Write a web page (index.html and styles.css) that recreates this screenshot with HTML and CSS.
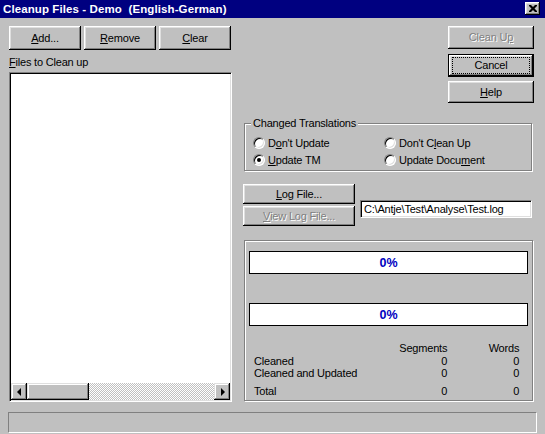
FILE: index.html
```html
<!DOCTYPE html>
<html>
<head>
<meta charset="utf-8">
<title>Cleanup Files</title>
<link rel="stylesheet" href="styles.css">
</head>
<body>
<div class="window">
  <div class="titlebar">
    <span class="title">Cleanup Files - Demo&nbsp; (English-German)</span>
    <span class="close"><svg width="8" height="7" viewBox="0 0 8 7"><path d="M0 0h2l2 2 2-2h2v1l-2.5 2.5 2.5 2.5v1h-2l-2-2-2 2h-2v-1l2.5-2.5-2.5-2.5z" fill="#000"/></svg></span>
  </div>
  <div class="client">
    <div class="cols">
      <div class="left">
        <div class="btnrow">
          <div class="btn w72"><u>A</u>dd...</div>
          <div class="btn w72"><u>R</u>emove</div>
          <div class="btn w72"><u>C</u>lear</div>
        </div>
        <div class="label"><u>F</u>iles to Clean up</div>
        <div class="listbox">
          <div class="listcontent"></div>
          <div class="hscroll">
            <div class="sbtn"><span class="tri-left"></span></div>
            <div class="thumb"></div>
            <div class="track"></div>
            <div class="sbtn"><span class="tri-right"></span></div>
          </div>
        </div>
      </div>
      <div class="right">
        <div class="topbtns">
          <div class="btn w86 disabled">Clean U<u>p</u></div>
          <div class="btn w86 default"><span class="focus">Cancel</span></div>
          <div class="btn w86 help"><u>H</u>elp</div>
        </div>
        <div class="group trans">
          <span class="legend">Changed Translations</span>
          <div class="radios">
            <div class="radio"><span class="rb"></span>D<u>o</u>n't Update</div>
            <div class="radio"><span class="rb"></span>Don't C<u>l</u>ean Up</div>
            <div class="radio"><span class="rb on"></span><u>U</u>pdate TM</div>
            <div class="radio"><span class="rb"></span>Update Docu<u>m</u>ent</div>
          </div>
        </div>
        <div class="logrow">
          <div class="logbtns">
            <div class="btn w112 h20"><u>L</u>og File...</div>
            <div class="btn w112 h20 disabled"><u>V</u>iew Log File...</div>
          </div>
          <div class="field">C:\Antje\Test\Analyse\Test.log</div>
        </div>
        <div class="group prog">
          <div class="pbar">0%</div>
          <div class="pbar second">0%</div>
          <div class="stats">
            <div></div><div class="num">Segments</div><div class="num">Words</div>
            <div>Cleaned</div><div class="num">0</div><div class="num">0</div>
            <div>Cleaned and Updated</div><div class="num">0</div><div class="num">0</div>
            <div class="total">Total</div><div class="num total">0</div><div class="num total">0</div>
          </div>
        </div>
      </div>
    </div>
    <div class="status"></div>
  </div>
</div>
</body>
</html>
```
FILE: styles.css
```css
html, body {
  margin: 0;
  padding: 0;
  background: #c0c0c0;
}
body {
  font-family: "Liberation Sans", Arial, sans-serif;
  font-size: 11px;
  letter-spacing: -0.2px;
  color: #000;
}
.window {
  width: 545px;
  height: 434px;
  background: #c0c0c0;
  overflow: hidden;
}
.titlebar {
  height: 18px;
  background: #000080;
  display: flex;
  align-items: center;
  justify-content: space-between;
  padding: 0 5px 0 3px;
}
.title {
  color: #fff;
  font-weight: bold;
  font-size: 11.5px;
  letter-spacing: 0.1px;
}
.close {
  width: 15px;
  height: 13px;
  background: #c0c0c0;
  box-shadow: inset -1px -1px #000, inset 1px 1px #fff, inset -2px -2px #808080, inset 2px 2px #dfdfdf;
  display: flex;
  align-items: center;
  justify-content: center;
  margin-top: -1px;
}
.client {
  padding: 8px 0 0 9px;
}
.cols {
  display: flex;
}
.left {
  width: 223px;
}
.btn {
  height: 23px;
  box-sizing: border-box;
  background: #c0c0c0;
  box-shadow: inset -1px -1px #000, inset 1px 1px #fff, inset -2px -2px #808080, inset 2px 2px #dfdfdf;
  display: flex;
  align-items: center;
  justify-content: center;
  padding-bottom: 1px;
  white-space: nowrap;
}
.w72 { width: 72px; height: 24px; }
.w86 { width: 86px; }
.w112 { width: 112px; }
.h20 { height: 20px; }
.disabled {
  color: #808080;
  text-shadow: 1px 1px 0 #fff;
}
.btnrow {
  display: flex;
  gap: 3px;
}
.label {
  margin-top: 6px;
  line-height: 13px;
}
.listbox {
  margin-top: 3px;
  height: 330px;
  box-sizing: border-box;
  border: 1px solid;
  border-color: #808080 #fff #fff #808080;
  box-shadow: inset 1px 1px #000, inset -1px -1px #dfdfdf;
  padding: 1px;
  display: flex;
  flex-direction: column;
  background: #fff;
}
.listcontent {
  flex: 1;
  background: #fff;
}
.hscroll {
  height: 17px;
  display: flex;
}
.sbtn {
  width: 16px;
  height: 17px;
  background: #c0c0c0;
  box-shadow: inset -1px -1px #000, inset 1px 1px #dfdfdf, inset -2px -2px #808080, inset 2px 2px #fff;
  display: flex;
  align-items: center;
  justify-content: center;
}
.tri-left {
  width: 0;
  height: 0;
  border-top: 4px solid transparent;
  border-bottom: 4px solid transparent;
  border-right: 4px solid #000;
  margin-left: -1px;
}
.tri-right {
  width: 0;
  height: 0;
  border-top: 4px solid transparent;
  border-bottom: 4px solid transparent;
  border-left: 4px solid #000;
  margin-left: 1px;
}
.thumb {
  width: 62px;
  background: #c0c0c0;
  box-shadow: inset -1px -1px #000, inset 1px 1px #dfdfdf, inset -2px -2px #808080, inset 2px 2px #fff;
}
.track {
  flex: 1;
  background: repeating-conic-gradient(#c0c0c0 0 25%, #fff 0 50%) 0 0 / 2px 2px;
}
.right {
  margin-left: 11px;
  width: 291px;
}
.topbtns {
  display: flex;
  flex-direction: column;
  align-items: flex-end;
}
.default {
  margin-top: 5px;
  box-shadow: inset 0 0 0 1px #000, inset -2px -2px #000, inset 2px 2px #fff, inset -3px -3px #808080, inset 3px 3px #dfdfdf;
}
.focus {
  display: flex;
  align-items: center;
  justify-content: center;
  width: 76px;
  height: 15px;
  outline: 1px dotted #000;
}
.help {
  margin-top: 4px;
  height: 22px;
}
.group {
  position: relative;
  border: 1px solid #808080;
  box-shadow: 1px 1px 0 #fff, inset 1px 1px 0 #fff;
  margin-left: 1px;
}
.legend {
  position: absolute;
  top: -8px;
  left: 6px;
  padding: 0 2px;
  background: #c0c0c0;
  line-height: 14px;
}
.trans {
  margin-top: 20px;
  width: 288px;
  height: 48px;
  box-sizing: border-box;
  padding: 12px 0 0 8px;
}
.radios {
  display: grid;
  grid-template-columns: 131px 1fr;
  row-gap: 4px;
}
.radio {
  display: flex;
  align-items: center;
  height: 13px;
  white-space: nowrap;
}
.rb {
  width: 12px;
  height: 12px;
  box-sizing: border-box;
  border-radius: 50%;
  background: #fff;
  border: 1px solid;
  border-color: #808080 #fff #fff #808080;
  box-shadow: inset 1px 1px 0 #000, inset -1px -1px 0 #dfdfdf;
  margin-right: 3px;
  display: flex;
  align-items: center;
  justify-content: center;
}
.rb.on::after {
  content: "";
  width: 4px;
  height: 4px;
  border-radius: 50%;
  background: #000;
}
.logrow {
  display: flex;
  margin-top: 13px;
}
.logbtns {
  display: flex;
  flex-direction: column;
  gap: 2px;
}
.field {
  margin-left: 5px;
  margin-top: 16px;
  width: 172px;
  height: 18px;
  box-sizing: border-box;
  background: #fff;
  border: 1px solid;
  border-color: #808080 #fff #fff #808080;
  box-shadow: inset 1px 1px 0 #000, inset -1px -1px 0 #dfdfdf;
  padding: 2px 0 0 3px;
  line-height: 13px;
  white-space: nowrap;
}
.prog {
  margin-top: 14px;
  width: 289px;
  height: 161px;
  box-sizing: border-box;
  padding: 10px 0 0 4px;
}
.pbar {
  width: 279px;
  height: 23px;
  box-sizing: border-box;
  background: #fff;
  border: 1px solid #000;
  display: flex;
  align-items: center;
  justify-content: center;
  color: #0000c0;
  font-weight: bold;
  font-size: 12.5px;
  letter-spacing: 0;
}
.pbar.second {
  margin-top: 29px;
}
.stats {
  margin: 16px 0 0 5px;
  width: 265px;
  display: grid;
  grid-template-columns: 1fr 90px 72px;
  line-height: 12.5px;
  white-space: nowrap;
}
.num {
  text-align: right;
}
.total {
  margin-top: 5px;
}
.status {
  margin: 10px 0 0 -1px;
  width: 529px;
  height: 21px;
  box-sizing: border-box;
  border: 1px solid;
  border-color: #808080 #fff #fff #808080;
}
```
